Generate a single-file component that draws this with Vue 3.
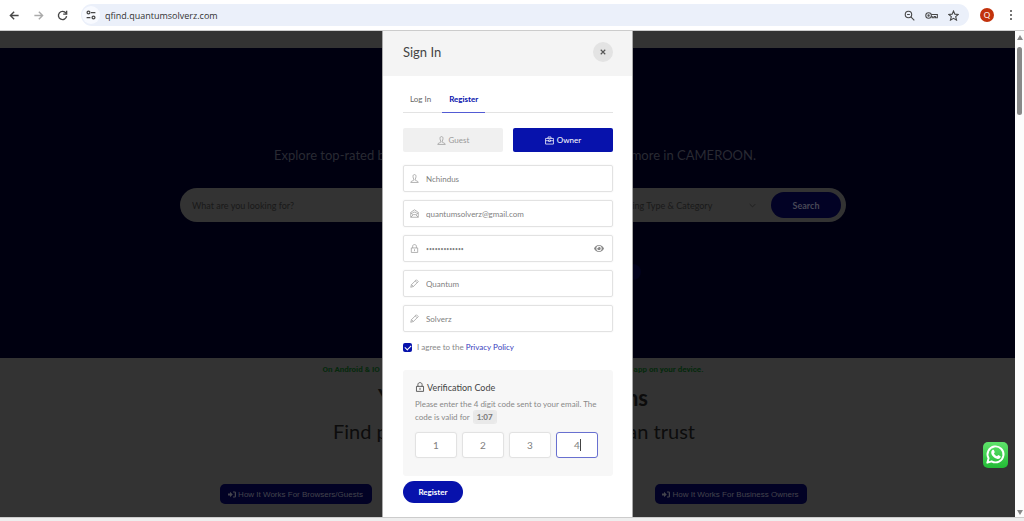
<script setup>
import { ref } from 'vue'

const url = ref('qfind.quantumsolverz.com')
const agree = ref(true)
const fields = ref([
  { id: 'username', label: 'Username', type: 'text', icon: 'user', value: 'Nchindus' },
  { id: 'email', label: 'Email address', type: 'email', icon: 'mail', value: 'quantumsolverz@gmail.com' },
  { id: 'password', label: 'Password', type: 'password', icon: 'lock', value: 'quantumsolver' },
  { id: 'first-name', label: 'First name', type: 'text', icon: 'pen', value: 'Quantum' },
  { id: 'last-name', label: 'Last name', type: 'text', icon: 'pen', value: 'Solverz' }
])
const code = ref(['1', '2', '3', '4'])
const icons = {
  user: 'M8 6.500C8 3 9.500 1.500 12 1.500S16 3 16 6.500c0 3-1 5.500-2 7v3c0 1.500 8 1.500 8 6H2c0-4.500 8-4.500 8-6v-3c-1-1.500-2-4-2-7z',
  mail: 'M2 22V9l10-7 10 7v13zM2 22l7-7h6l7 7M2 10l6 5M22 10l-6 5M5 12c2-5 12-5 14 0',
  lock: 'M3.500 10.500h17v12h-17zM7 10.500V6c0-6 10-6 10 0v4.500M12 14v5',
  pen: 'M2 22l2-7L17 2l5 5L9 20zM14 5l5 5M4 15l5 5',
  brief: 'M1.500 6.500h21v15h-21zM8 6.500v-4h8v4M1.500 12.500h8M14.500 12.500h8M9.500 10.500h5v4h-5z'
}
</script>

<template>
  <div class="browser">
    <header class="toolbar">
      <nav class="nav">
        <button aria-label="Back"><svg viewBox="0 0 16 16"><path d="M14 8H2M7.500 2.500L2 8l5.500 5.500" /></svg></button>
        <button aria-label="Forward" class="off"><svg viewBox="0 0 16 16"><path d="M2 8h12M8.500 2.500L14 8l-5.500 5.500" /></svg></button>
        <button aria-label="Reload"><svg viewBox="0 0 16 16"><path d="M13 4.500A6 6 0 1 0 14 9M14 1v5H9" /></svg></button>
      </nav>
      <div class="address">
        <button class="site" aria-label="Site information">
          <svg viewBox="0 0 16 16"><path d="M8 4h7M1 12h6" /><circle cx="4" cy="4" r="2.300" /><circle cx="12" cy="12" r="2.300" /></svg>
        </button>
        <input v-model="url" class="url" type="text" aria-label="Address" />
        <button aria-label="Zoom"><svg viewBox="0 0 16 16"><circle cx="6.500" cy="6.500" r="4.700" /><path d="M10 10l5 5M4.500 6.500h4" /></svg></button>
        <button aria-label="Passwords" class="wide"><svg viewBox="0 0 20 16"><circle cx="5.500" cy="8" r="4.300" /><circle cx="5.500" cy="8" r="1" /><path d="M9.500 6.500H19v5h-3v-2h-2v2h-3v-2H9.500" /></svg></button>
        <button aria-label="Bookmark"><svg viewBox="0 0 16 16"><path d="M8 1.500l2 4.500 5 .5-3.800 3.200 1.200 5L8 12.100l-4.400 2.600 1.200-5L1 6.500 6 6z" /></svg></button>
      </div>
      <button class="avatar" aria-label="Profile">Q</button>
      <button class="menu" aria-label="Menu"><i></i><i></i><i></i></button>
    </header>

    <main class="viewport">
      <div class="page">
        <section class="hero">
          <p class="split tagline"><span>Explore top-rated b</span><span>more in CAMEROON.</span></p>
          <div class="search">
            <input type="text" placeholder="What are you looking for?" aria-label="What are you looking for?" />
            <button class="category">ting Type &amp; Category
              <svg viewBox="0 0 10 6"><path d="M1 1l4 4 4-4" /></svg>
            </button>
            <button class="go">Search</button>
          </div>
          <div class="dot-row"><i></i></div>
        </section>
        <section class="intro">
          <p class="split apps"><span>On Android &amp; IO</span><span>app on your device.</span></p>
          <h1 class="split"><span>Y</span><span>ns</span></h1>
          <h2 class="split"><span>Find p</span><span>an trust</span></h2>
          <div class="split links">
            <a v-for="t in ['Browsers/Guests', 'Business Owners']" :key="t" href="#">
              <svg viewBox="0 0 16 14"><path d="M0 5h4V1.500L9.500 7 4 12.500V9H0z" /><path d="M10 1h3.500A2.500 2.500 0 0 1 16 3.500v7a2.500 2.500 0 0 1-2.500 2.500H10v-2h3.500V3H10z" /></svg>
              How It Works For {{ t }}
            </a>
          </div>
        </section>
      </div>

      <div class="overlay">
        <div class="dialog" role="dialog" aria-labelledby="dialog-title">
          <header class="head">
            <h3 id="dialog-title">Sign In</h3>
            <button class="close" aria-label="Close"><svg viewBox="0 0 8 8"><path d="M1 1l6 6M7 1L1 7" /></svg></button>
          </header>
          <form class="body" @submit.prevent>
            <nav class="tabs"><a href="#">Log In</a><a href="#" class="active">Register</a></nav>
            <div class="roles">
              <button type="button"><svg class="ico" viewBox="0 0 24 24"><path :d="icons.user" /></svg>Guest</button>
              <button type="button" class="on"><svg class="ico" viewBox="0 0 24 24"><path :d="icons.brief" /></svg>Owner</button>
            </div>
            <div class="fields">
              <div v-for="f in fields" :key="f.id" class="field">
                <label :for="f.id" :aria-label="f.label"><svg class="ico" viewBox="0 0 24 24"><path :d="icons[f.icon]" /></svg></label>
                <input :id="f.id" v-model="f.value" :type="f.type" />
                <button v-if="f.type === 'password'" type="button" class="eye" aria-label="Show password">
                  <svg viewBox="0 0 20 14"><path fill-rule="evenodd" d="M0 7C2 3 5.500 0 10 0s8 3 10 7c-2 4-5.500 7-10 7S2 11 0 7zm10-5.300a5.300 5.300 0 1 0 0 10.600 5.300 5.300 0 0 0 0-10.600z" /><path d="M10 3.500A3.500 3.500 0 1 1 6.500 7c0-.4.1-.8.2-1.100A1.700 1.700 0 0 0 9 3.700c.3-.1.6-.2 1-.2z" /></svg>
                </button>
              </div>
            </div>
            <div class="agree">
              <input id="agree" v-model="agree" type="checkbox" />
              <label for="agree">I agree to the <a href="#">Privacy Policy</a></label>
            </div>
            <section class="verify">
              <h4><svg class="ico" viewBox="0 0 24 24"><path :d="icons.lock" /></svg>Verification Code</h4>
              <p>Please enter the 4 digit code sent to your email. The code is valid for <b>1:07</b></p>
              <div class="digits">
                <div v-for="(c, i) in code" :key="i" class="digit" :class="{ current: i === 3 }">
                  <input v-model="code[i]" type="text" maxlength="1" :aria-label="'Digit ' + (i + 1)" />
                  <i v-if="i === 3" class="caret"></i>
                </div>
              </div>
            </section>
            <button class="submit">Register</button>
          </form>
        </div>
        <a href="#" class="chat" aria-label="WhatsApp">
          <svg viewBox="0 0 26 26">
            <path fill="none" stroke="#fff" stroke-width="2" stroke-linejoin="round" d="M4.500 21.500l1.300-4.600a8.300 8.300 0 1 1 3.200 3.200z" />
            <path fill="#fff" stroke="none" d="M9.800 8.300c.5-.5 1.200-.5 1.500.1l.9 2c.1.500-.4 1-.8 1.500.8 1.400 1.800 2.300 3.200 2.900l1.200-1.200 2.500 1.200c.3 2-1.600 3-3.100 2.800-3.900-.7-6.700-4.200-6.600-6.700 0-1 .5-2 1.200-2.600z" />
          </svg>
        </a>
      </div>

      <div class="scrollbar" aria-hidden="true"><i class="up"></i><i class="thumb"></i><i class="down"></i></div>
    </main>
    <footer class="edge"></footer>
  </div>
</template>

<style>
html, body { height: 100%; }
body { margin: 0; overflow: hidden; background: #eee; }
#app { height: 100%; }
</style>

<style scoped>
* { box-sizing: border-box; }
.browser { display: flex; flex-direction: column; height: 100vh; font-family: Lato, "Open Sans", sans-serif; font-size: 8px; color: #808080; }
button { border: 0; padding: 0; background: none; font: inherit; color: inherit; cursor: pointer; }
input { font: inherit; color: inherit; border: 0; padding: 0; background: none; min-width: 0; outline: 0; }
a { color: inherit; text-decoration: none; }
h1, h2, h3, h4, p { margin: 0; font-weight: 400; }
svg { display: block; fill: none; stroke: currentColor; }

.toolbar { display: flex; align-items: center; flex: none; height: 31px; background: #fff; border-bottom: 1px solid #ccc; padding: 0 12px 0 9px; color: #474747; }
.nav { display: flex; gap: 13px; margin-right: 13px; }
.toolbar svg { width: 11px; height: 11px; stroke-width: 2; }
.off { color: #aaa; }
.address { flex: 1; display: flex; align-items: center; gap: 10px; height: 22px; border-radius: 11px; background: #ebf0fa; padding: 0 10px 0 1px; }
.address svg { stroke-width: 1.600; }
.address .wide svg { width: 13px; }
.address .site { display: grid; place-items: center; width: 18px; height: 18px; border-radius: 50%; background: #f8faff; }
.address .site svg { width: 10px; height: 10px; stroke-width: 2; }
.url { flex: 1; margin-left: -5px; font-family: "Open Sans", sans-serif; font-size: 9px; color: #333; }
.avatar { width: 14px; height: 14px; border-radius: 50%; background: #c2320c; color: #fff; margin: 0 16px 0 11px; }
.menu { display: grid; gap: 2px; }
.menu i { width: 2px; height: 2px; border-radius: 50%; background: #474747; }

.viewport { flex: 1; position: relative; min-height: 0; overflow: hidden; }
.page { padding-top: 17px; height: 100%; background: #333; }
.hero { height: 310px; background: #000010; display: flex; flex-direction: column; align-items: center; padding: 98px 0 0 2px; }
.split { display: flex; justify-content: space-between; margin: 0 auto; }
.tagline { width: 486px; padding-left: 4px; font-size: 13px; line-height: 18px; color: #292a33; }
.search { display: flex; align-items: center; width: 666px; height: 34px; margin-top: 24px; padding: 0 5px 0 12px; border-radius: 17px; background: #333; color: #191919; font-size: 9px; }
.search input { flex: 1; }
.search input::placeholder { color: #191919; opacity: 1; }
.category { display: flex; align-items: center; justify-content: space-between; width: 127px; margin-right: 15px; }
.category svg { width: 7px; height: 5px; }
.go { width: 70px; height: 26px; border-radius: 13px; background: #020225; color: #484856; font-weight: 700; }
.dot-row { display: flex; justify-content: flex-end; width: 256px; margin-top: 42px; }
.dot-row i { width: 16px; height: 16px; border-radius: 50%; background: #02021d; }
.intro { padding: 6px 0 0 2px; color: #0c0c0c; }
.apps { width: 381px; font: 700 8px/12px Roboto, sans-serif; color: #06290d; }
.intro h1 { width: 270px; margin-top: 7px; font-size: 22px; line-height: 30px; font-weight: 700; }
.intro h2 { width: 364px; padding-left: 2px; margin-top: 2px; font-size: 20px; line-height: 32px; }
.links { width: 587px; margin-top: 37px; }
.links a { display: flex; align-items: center; justify-content: center; gap: 2px; width: 152px; height: 20px; border-radius: 5px; background: #020225; color: #44444d; font: 8px "Liberation Sans", sans-serif; }
.links svg { width: 8px; height: 7px; fill: currentColor; stroke: none; }

.overlay { position: absolute; inset: 0 9px 0 0; display: flex; justify-content: center; }
.dialog { width: 251px; height: 100%; background: #fff; border-left: 1px solid #aaa; border-right: 1px solid #aaa; }
.head { display: flex; align-items: center; justify-content: space-between; height: 45px; padding: 0 19px 4px 20px; background: #f4f4f4; }
.head h3 { font-size: 13px; color: #444; }
.close { display: grid; place-items: center; width: 20px; height: 20px; border-radius: 50%; background: #e3e3e3; color: #555; }
.close svg { width: 6px; height: 6px; stroke-width: 1.500; }
.body { padding: 12px 19px 12px 20px; }
.tabs { display: flex; height: 25px; border-bottom: 1px solid #e3e3e3; line-height: 23px; color: #666; }
.tabs a { height: 25px; padding: 0 7px; margin-right: 4px; }
.tabs .active { color: #0712ac; border-bottom: 1px solid #525bd4; font-weight: 700; }
.roles { display: grid; grid-template-columns: 1fr 1fr; gap: 10px; margin: 15px 0 13px; }
.roles button { display: flex; align-items: center; justify-content: center; gap: 3px; height: 24px; border-radius: 2px; background: #f0f0f0; color: #999; }
.roles .on { background: #0712ac; color: #fff; }
.ico { width: 9px; height: 9px; stroke-width: 2; }
.fields { display: grid; gap: 8px; }
.field { display: flex; align-items: center; height: 27px; padding: 0 8px 0 6px; border: 1px solid #e2e2e2; border-radius: 2px; box-shadow: 0 0 2px #eee; }
.field label { color: #999; margin-right: 7px; }
.field input { flex: 1; }
.field input[type="password"] { font-size: 5px; }
.eye svg { width: 10px; height: 7px; fill: #888; stroke: none; }
.agree { display: flex; align-items: center; gap: 5px; height: 12px; margin-top: 9px; color: #888; }
.agree input { appearance: none; width: 9px; height: 9px; margin: 0; border-radius: 2px; background: #0712ac; display: grid; place-items: center; }
.agree input:checked::after { content: ""; width: 5px; height: 3px; border: solid #fff; border-width: 0 0 1px 1px; transform: rotate(-45deg); }
.agree a { color: #3840bd; }
.verify { margin-top: 17px; padding: 11px 15px 18px 12px; background: #f7f7f7; border-radius: 3px; }
.verify h4 { display: flex; align-items: center; gap: 2px; height: 12px; font-size: 9px; color: #444; }
.verify h4 .ico { width: 10px; height: 10px; }
.verify p { margin: 5px 0 8px; line-height: 13px; color: #888; }
.verify b { padding: 1px 3px; margin-left: 2px; border-radius: 2px; background: #e9e9e9; box-shadow: 0 0 0 1px #e9e9e9; color: #777; }
.digits { display: grid; grid-template-columns: repeat(4, 1fr); gap: 5px; }
.digit { position: relative; height: 26px; border: 1px solid #e2e2e2; border-radius: 3px; background: #fff; box-shadow: 0 0 2px #eee; }
.digit input { width: 100%; height: 100%; text-align: center; font-size: 10px; }
.digit.current { border-color: #6870d0; }
.caret { position: absolute; top: 6px; left: 23px; width: 1px; height: 12px; background: #444; }
.submit { width: 60px; height: 22px; margin-top: 5px; border-radius: 11px; background: #0712ac; color: #fff; font-weight: 700; }
.chat { position: absolute; right: 7px; bottom: 49px; width: 25px; height: 26px; border-radius: 5px; background: linear-gradient(#5fe36b, #22ba35); }
.scrollbar { position: absolute; inset: 0 0 0 auto; width: 9px; background: #fcfcfc; display: flex; flex-direction: column; align-items: center; padding: 4px 0 2px; }
.up, .down { border: 3px solid transparent; border-top-width: 0; border-bottom: 5px solid #888; }
.thumb { width: 5px; height: 68px; margin: 7px 0 auto; border-radius: 3px; background: #888; }
.down { border-bottom-width: 0; border-top: 5px solid #888; }
.edge { flex: none; height: 4px; background: #eee; border-top: 1px solid #ccc; }
</style>
